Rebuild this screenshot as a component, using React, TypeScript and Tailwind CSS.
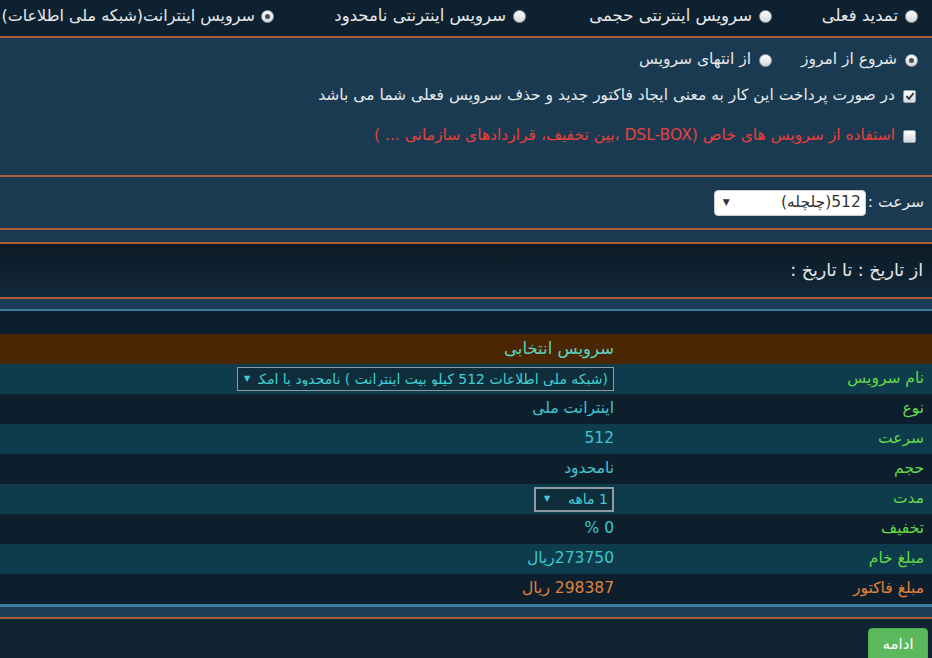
import React from "react";

function Radio({ checked = false }: { checked?: boolean }) {
  return (
    <span className="inline-flex w-[13px] h-[13px] shrink-0 items-center justify-center rounded-full border border-[#9aa4aa] bg-gradient-to-b from-[#ffffff] to-[#d4d8db]">
      {checked ? <span className="w-[5px] h-[5px] rounded-full bg-[#4a4f53]" /> : null}
    </span>
  );
}

function Check({ checked = false }: { checked?: boolean }) {
  return (
    <span className="inline-flex w-[13px] h-[13px] shrink-0 items-center justify-center rounded-[2px] border border-[#9aa4aa] bg-gradient-to-b from-[#ffffff] to-[#d4d8db]">
      {checked ? (
        <svg width="10" height="10" viewBox="0 0 10 10">
          <path d="M1.5 5.2 L4 7.8 L8.6 2" fill="none" stroke="#2b2f33" strokeWidth="1.8" />
        </svg>
      ) : null}
    </span>
  );
}

export default function App() {
  const labelCls = "w-[312px] shrink-0 pr-[8px] text-[#63d94a] text-[15.5px]";
  const valueCls = "flex-1 pr-[6px] text-[#3cc8cf] text-[15.5px]";
  return (
    <div
      dir="rtl"
      className="w-[932px] h-[658px] overflow-hidden bg-[#112433] text-[#e6e9ea] text-[15.5px] font-['DejaVu_Sans',sans-serif] leading-none"
    >
      {/* top bar */}
      <div className="h-[36px] bg-[#0e2130] flex items-center pr-[14px] pb-[4px] whitespace-nowrap text-[16.5px]">
        <label className="w-[146px] shrink-0 flex items-center gap-[7px]">
          <Radio />
          <span>تمدید فعلی</span>
        </label>
        <label className="w-[246px] shrink-0 flex items-center gap-[7px]">
          <Radio />
          <span>سرویس اینترنتی حجمی</span>
        </label>
        <label className="w-[252px] shrink-0 flex items-center gap-[7px]">
          <Radio />
          <span>سرویس اینترنتی نامحدود</span>
        </label>
        <label className="flex-1 min-w-0 flex items-center gap-[6px]">
          <Radio checked />
          <span className="text-[16px]">سرویس اینترانت(شبکه ملی اطلاعات)</span>
        </label>
      </div>
      <div className="h-[2px] bg-[#a95e36]" />

      {/* options section */}
      <div className="h-[137px] bg-[#1a3a52] pr-[14px] pt-[12px] flex flex-col whitespace-nowrap">
        <div className="h-[20px] flex items-center">
          <label className="w-[146px] shrink-0 flex items-center gap-[8px]">
            <Radio checked />
            <span>شروع از امروز</span>
          </label>
          <label className="flex items-center gap-[8px]">
            <Radio />
            <span>از انتهای سرویس</span>
          </label>
        </div>
        <label className="mt-[16px] h-[20px] flex items-center gap-[8px] pr-[2px]">
          <Check checked />
          <span>در صورت پرداخت این کار به معنی ایجاد فاکتور جدید و حذف سرویس فعلی شما می باشد</span>
        </label>
        <label className="mt-[20px] h-[20px] flex items-center gap-[8px] pr-[2px] text-[#e8403a] text-[15.5px]">
          <Check />
          <span>استفاده از سرویس های خاص (DSL-BOX ،بین تخفیف، قراردادهای سازمانی ... )</span>
        </label>
      </div>
      <div className="h-[2px] bg-[#a95e36]" />

      {/* speed select */}
      <div className="h-[51px] bg-[#1a3a52] pr-[8px] flex items-center">
        <span className="text-[15.5px]">سرعت :</span>
        <div className="mr-[2px] w-[152px] h-[26px] rounded-[4px] bg-white border border-[#c9cdd0] flex items-center pr-[4px] pl-[8px] text-[#333] text-[15.5px]">
          <span className="flex-1">512(چلچله)</span>
          <span className="text-[9px] text-[#333]">▼</span>
        </div>
      </div>
      <div className="h-[2px] bg-[#a95e36]" />
      <div className="h-[12px] bg-[#1a3a52]" />
      <div className="h-[2px] bg-[#a95e36]" />

      {/* date */}
      <div className="h-[53px] bg-gradient-to-b from-[#0c1a25] to-[#12283a] pr-[9px] flex items-center text-[17.5px]">
        از تاریخ : تا تاریخ :
      </div>
      <div className="h-[2px] bg-[#a95e36]" />

      {/* table */}
      <div className="h-[10px] bg-[#1b3d55]" />
      <div className="h-[2px] bg-[#3d7fa2]" />
      <div className="h-[23px] bg-[#0d1f2c]" />
      <div className="h-[30px] bg-[#4a2604] flex items-center">
        <div className="w-[312px] shrink-0" />
        <div className="flex-1 pr-[6px] text-[#5dd3c2] text-[16.5px]">سرویس انتخابی</div>
      </div>

      <div className="h-[30px] bg-[#0e3c4c] flex items-center">
        <div className={labelCls}>نام سرویس</div>
        <div className="flex-1 pr-[6px] flex">
          <div className="w-[377px] h-[24px] border border-[#8e9ca2] bg-[#0f2d3a] flex items-center pr-[5px] pl-[6px] text-[#3fcfd4] text-[14px]">
            <span className="flex-1 min-w-0 overflow-hidden whitespace-nowrap">(شبکه ملی اطلاعات 512 کیلو بیت اینترانت ) نامحدود با امکان استفاده</span>
            <span className="text-[8px] mr-[8px] shrink-0">▼</span>
          </div>
        </div>
      </div>
      <div className="h-[30px] bg-[#0d1f2c] flex items-center">
        <div className={labelCls}>نوع</div>
        <div className={valueCls}>اینترانت ملی</div>
      </div>
      <div className="h-[30px] bg-[#0e3c4c] flex items-center">
        <div className={labelCls}>سرعت</div>
        <div className={valueCls}>512</div>
      </div>
      <div className="h-[30px] bg-[#0d1f2c] flex items-center">
        <div className={labelCls}>حجم</div>
        <div className={valueCls}>نامحدود</div>
      </div>
      <div className="h-[30px] bg-[#0e3c4c] flex items-center">
        <div className={labelCls}>مدت</div>
        <div className="flex-1 pr-[6px] flex">
          <div className="w-[80px] h-[25px] border-2 border-[#8e9ca2] bg-[#0f2d3a] flex items-center pr-[4px] pl-[8px] text-[#3fcfd4] text-[14px]">
            <span className="flex-1">1 ماهه</span>
            <span className="text-[8px]">▼</span>
          </div>
        </div>
      </div>
      <div className="h-[30px] bg-[#0d1f2c] flex items-center">
        <div className={labelCls}>تخفیف</div>
        <div className={valueCls}>0 %</div>
      </div>
      <div className="h-[30px] bg-[#0e3c4c] flex items-center">
        <div className={labelCls}>مبلغ خام</div>
        <div className={valueCls}>273750ریال</div>
      </div>
      <div className="h-[30px] bg-[#0d1f2c] flex items-center">
        <div className="w-[312px] shrink-0 pr-[8px] text-[#e0823c] text-[15.5px]">مبلغ فاکتور</div>
        <div className="flex-1 pr-[6px] text-[#e0823c] text-[15.5px]">298387 ریال</div>
      </div>
      <div className="h-[3px] bg-[#3d7fa2]" />
      <div className="h-[10px] bg-[#1b3d55]" />
      <div className="h-[2px] bg-[#a95e36]" />

      {/* bottom */}
      <div className="pt-[9px] pr-[4px] flex">
        <button className="w-[60px] h-[40px] rounded-[4px] bg-[#5cb85c] border border-[#4cae4c] text-white text-[15px] pb-[8px]">
          ادامه
        </button>
      </div>
    </div>
  );
}
